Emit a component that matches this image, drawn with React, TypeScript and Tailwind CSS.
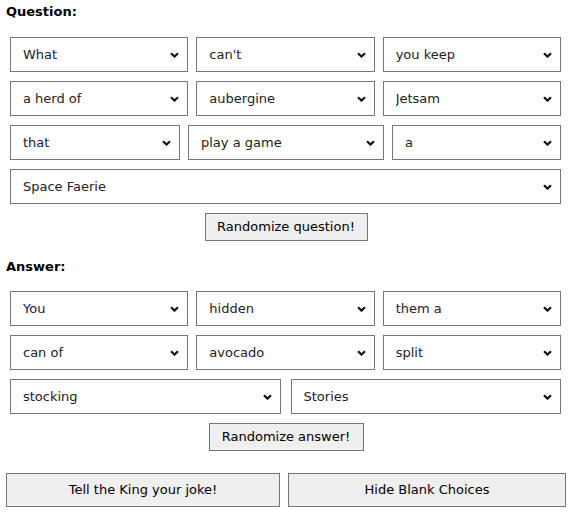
import React from 'react';

const Chevron = () => (
  <svg width="9" height="6" viewBox="0 0 9 6" className="pointer-events-none absolute right-[9px] top-1/2 -translate-y-1/2">
    <path d="M1 1.2 L4.5 4.6 L8 1.2" fill="none" stroke="#111" strokeWidth="2.2" />
  </svg>
);

interface PickProps {
  value: string;
  className?: string;
}

const Pick: React.FC<PickProps> = ({ value, className = 'flex-1' }) => (
  <div className={`relative h-[35px] ${className}`}>
    <select
      defaultValue={value}
      className="h-full w-full appearance-none border border-[#767676] bg-white pl-[12px] pr-6 text-[13px] text-[#222] outline-none"
    >
      <option value={value}>{value}</option>
    </select>
    <Chevron />
  </div>
);

const Btn: React.FC<{ label: string; className?: string }> = ({ label, className = '' }) => (
  <button className={`border border-[#767676] bg-[#efefef] text-[13px] text-black ${className}`}>{label}</button>
);

export default function App() {
  return (
    <div className="w-[572px] bg-white pt-[4px] text-[13px]" style={{ fontFamily: '"DejaVu Sans", Verdana, sans-serif' }}>
      <div className="px-[6px] text-[13px] font-bold leading-[16px] text-black">Question:</div>

      <div className="mt-[17px] flex flex-col gap-[9px] pl-[10px] pr-[11px]">
        <div className="flex gap-2">
          <Pick value="What" />
          <Pick value="can't" />
          <Pick value="you keep" />
        </div>
        <div className="flex gap-2">
          <Pick value="a herd of" />
          <Pick value="aubergine" />
          <Pick value="Jetsam" />
        </div>
        <div className="flex gap-2">
          <Pick value="that" className="w-[170px]" />
          <Pick value="play a game" className="w-[196px]" />
          <Pick value="a" className="flex-1" />
        </div>
        <div className="flex">
          <Pick value="Space Faerie" />
        </div>
      </div>

      <div className="mt-[9px] flex justify-center">
        <Btn label="Randomize question!" className="h-[28px] w-[163px]" />
      </div>

      <div className="mt-[18px] px-[6px] text-[13px] font-bold leading-[16px] text-black">Answer:</div>

      <div className="mt-[16px] flex flex-col gap-[9px] pl-[10px] pr-[11px]">
        <div className="flex gap-2">
          <Pick value="You" />
          <Pick value="hidden" />
          <Pick value="them a" />
        </div>
        <div className="flex gap-2">
          <Pick value="can of" />
          <Pick value="avocado" />
          <Pick value="split" />
        </div>
        <div className="flex gap-[10px]">
          <Pick value="stocking" />
          <Pick value="Stories" />
        </div>
      </div>

      <div className="mt-[9px] flex justify-center">
        <Btn label="Randomize answer!" className="h-[28px] w-[155px]" />
      </div>

      <div className="mt-[22px] flex gap-2 px-[6px] pb-[12px]">
        <Btn label="Tell the King your joke!" className="h-[34px] w-[274px]" />
        <Btn label="Hide Blank Choices" className="h-[34px] flex-1" />
      </div>
    </div>
  );
}
